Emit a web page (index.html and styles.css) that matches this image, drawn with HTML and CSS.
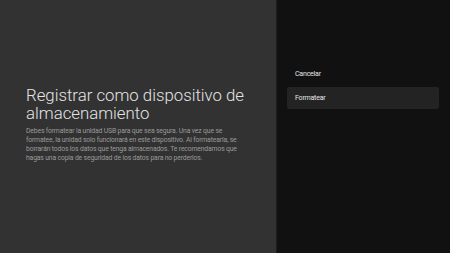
FILE: index.html
```html
<html>
<head>
	<title>Almacenamiento</title>
	<meta name="viewport" content="initial-scale=1, maximum-scale=1">
	<link rel="stylesheet" href="styles.css">
</head>
<body>
	<section id="info">
		<h1>Registrar como dispositivo de almacenamiento</h1>
		<p>Debes formatear la unidad USB para que sea segura. Una vez que se formatee, la unidad solo funcionará en este dispositivo. Al formatearla, se borrarán todos los datos que tenga almacenados. Te recomendamos que hagas una copia de seguridad de los datos para no perderlos.</p>
	</section>
	<section id="actions">
		<button>Cancelar</button>
		<button class="focused">Formatear</button>
	</section>
</body>
</html>
```
FILE: styles.css
```css
		body {
			margin: 0;
			width: 450px;
			height: 253px;
			display: flex;
			font-family: Roboto, "Liberation Sans", sans-serif;
			overflow: hidden;
		}
		#info {
			width: 277px;
			background-color: #323232;
			border-right: 1px solid #1d1d1d;
			box-sizing: border-box;
			padding: 86px 20px 0 26px;
		}
		#info h1 {
			margin: 0;
			font-weight: 300;
			font-size: 16.8px;
			line-height: 18.3px;
			color: #e4e4e4;
		}
		#info p {
			margin: 4px 0 0 0;
			max-width: 220px;
			font-size: 6.8px;
			letter-spacing: -0.15px;
			line-height: 9.2px;
			color: #9a9a9a;
		}
		#actions {
			flex-grow: 1;
			background-color: #111;
			display: flex;
			flex-direction: column;
			gap: 2px;
			padding: 63px 11px 0 10px;
		}
		#actions button {
			height: 22px;
			border: none;
			border-radius: 2px;
			background: transparent;
			color: #e6e6e6;
			font-family: Roboto, "Liberation Sans", sans-serif;
			font-size: 7px;
			letter-spacing: -0.2px;
			text-align: left;
			padding: 0 8px;
		}
		#actions button.focused {
			background-color: #232323;
		}
```
